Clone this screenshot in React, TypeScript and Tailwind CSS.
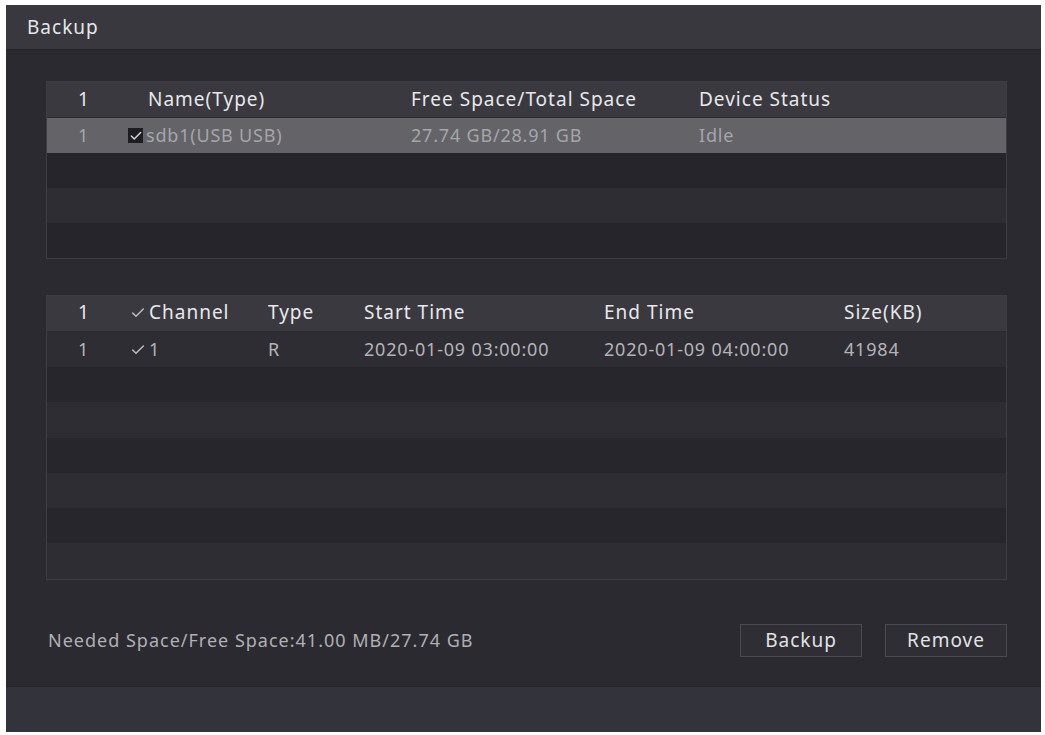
import { Check } from 'lucide-react';

const font = { fontFamily: '"Noto Sans", "Open Sans", sans-serif' };

const rowBg = (i: number) => (i % 2 === 0 ? 'bg-[#2d2d33]' : 'bg-[#26262c]');

const Tick = ({ boxed }: { boxed?: boolean }) =>
  boxed ? (
    <span className="w-[15px] h-[15px] bg-[#1e1e22] flex items-center justify-center mr-[3px]">
      <Check size={14} strokeWidth={2.5} className="text-[#d6d6d8]" />
    </span>
  ) : (
    <Check size={16} strokeWidth={2.2} className="text-[#bdbdc0] mr-[3px]" />
  );

const App = () => {
  return (
    <div className="w-[1045px] h-[735px] bg-white pt-[5px] pl-[6px] pr-[4px] pb-[3px]" style={font}>
      <div className="w-full h-full flex flex-col bg-[#2a2a30]">
        <div className="h-[45px] bg-[#38383e] border-b border-[#222227] flex items-center pl-[21px] text-[19px] tracking-[1px] text-[#e6e6e8]">
          Backup
        </div>

        <div className="flex-1 px-[40px] pt-[31px]">
          {/* device table */}
          <div className="border border-[#3d3d44] w-[961px]">
            <div className="h-[36px] bg-[#39393f] border-b border-[#2a2a30] flex items-center text-[19px] tracking-[1px] text-[#e8e8ea]">
              <div className="w-[101px] pl-[31px]">1</div>
              <div className="w-[263px]">Name(Type)</div>
              <div className="w-[288px]">Free Space/Total Space</div>
              <div>Device Status</div>
            </div>
            <div className="h-[35px] bg-[#636368] flex items-center text-[18px] tracking-[0.8px] text-[#a6a6aa]">
              <div className="w-[81px] pl-[31px]">1</div>
              <div className="w-[283px] flex items-center">
                <Tick boxed />
                sdb1(USB USB)
              </div>
              <div className="w-[288px]">27.74 GB/28.91 GB</div>
              <div>Idle</div>
            </div>
            {[0, 1, 2].map((i) => (
              <div key={i} className={`h-[35px] ${i % 2 === 0 ? 'bg-[#25252b]' : 'bg-[#2d2d33]'}`} />
            ))}
          </div>

          {/* file table */}
          <div className="border border-[#3d3d44] w-[961px] mt-[36px]">
            <div className="h-[36px] bg-[#39393f] border-b border-[#2a2a30] flex items-center text-[19px] tracking-[1px] text-[#e8e8ea] pb-[2px]">
              <div className="w-[83px] pl-[31px]">1</div>
              <div className="w-[138px] flex items-center">
                <Tick />
                Channel
              </div>
              <div className="w-[96px]">Type</div>
              <div className="w-[240px]">Start Time</div>
              <div className="w-[240px]">End Time</div>
              <div>Size(KB)</div>
            </div>
            <div className={`h-[35px] ${rowBg(0)} flex items-center text-[18px] tracking-[0.8px] text-[#b4b4b8]`}>
              <div className="w-[83px] pl-[31px]">1</div>
              <div className="w-[138px] flex items-center">
                <Tick />1
              </div>
              <div className="w-[96px]">R</div>
              <div className="w-[240px]">2020-01-09 03:00:00</div>
              <div className="w-[240px]">2020-01-09 04:00:00</div>
              <div>41984</div>
            </div>
            {[1, 2, 3, 4, 5, 6].map((i) => (
              <div key={i} className={`h-[35.3px] ${rowBg(i)}`} />
            ))}
          </div>

          <div className="flex items-center justify-between mt-[44px] w-[961px]">
            <div className="pl-[2px] text-[18px] tracking-[1px] text-[#b0b0b4]">Needed Space/Free Space:41.00 MB/27.74 GB</div>
            <div className="flex gap-[23px]">
              <button className="w-[122px] h-[33px] bg-[#2e2e34] border border-[#4a4a52] text-[19px] tracking-[1px] text-[#e2e2e4]">
                Backup
              </button>
              <button className="w-[122px] h-[33px] bg-[#2e2e34] border border-[#4a4a52] text-[19px] tracking-[1px] text-[#e2e2e4]">
                Remove
              </button>
            </div>
          </div>
        </div>

        <div className="h-[46px] bg-[#33333b] border-t border-[#222227]" />
      </div>
    </div>
  );
};

export default App;
